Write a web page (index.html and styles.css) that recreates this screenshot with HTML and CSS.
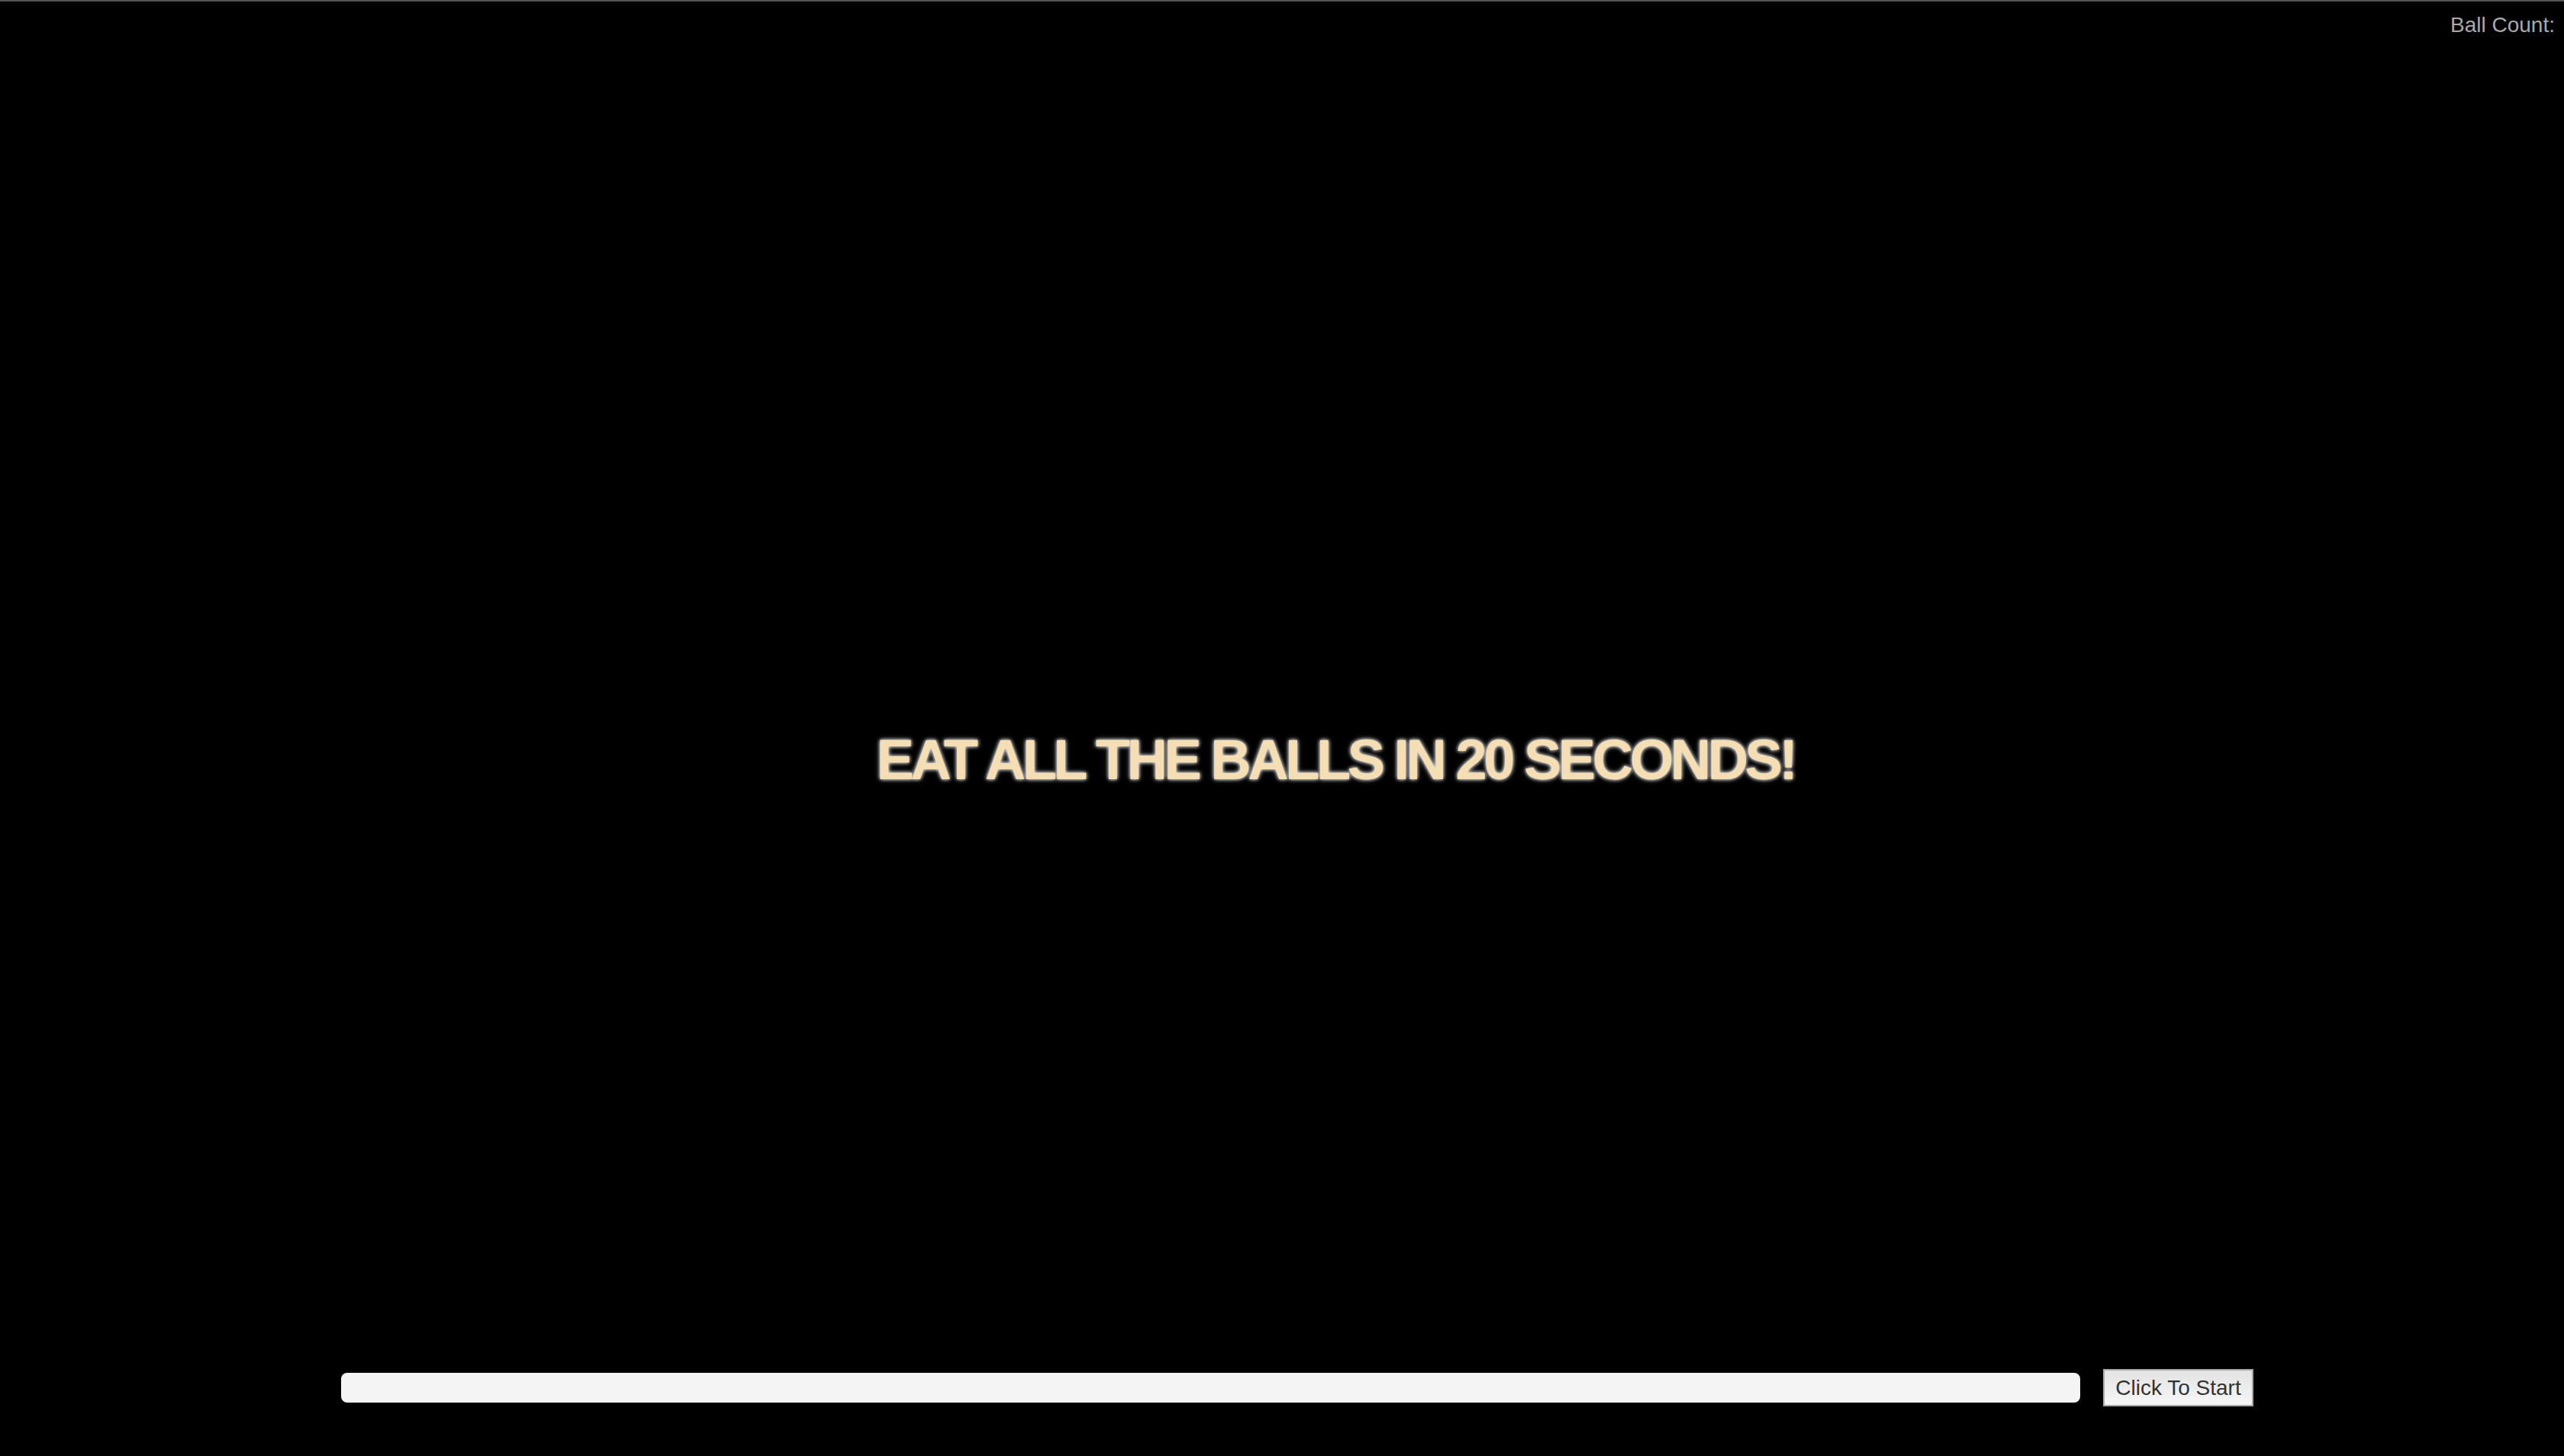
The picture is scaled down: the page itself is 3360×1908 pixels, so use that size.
FILE: index.html
```html
<!DOCTYPE html>
<html lang="en">
<head>
<meta charset="utf-8">
<title>Eat the Balls</title>
<link rel="stylesheet" href="styles.css">
</head>
<body>
<div class="page">
  <header class="topbar">
    <span class="ball-count">Ball Count:</span>
  </header>
  <main class="stage">
    <h1 class="headline">EAT ALL THE BALLS IN 20 SECONDS!</h1>
  </main>
  <footer class="controls">
    <div class="name-field"></div>
    <button class="start-btn" type="button">Click To Start</button>
  </footer>
</div>
</body>
</html>
```
FILE: styles.css
```css
html, body {
  margin: 0;
  padding: 0;
  background: #000;
  overflow: hidden;
}
body {
  font-family: "Liberation Sans", Arial, sans-serif;
}
.page {
  box-sizing: border-box;
  height: 1908px;
  border-top: 2px solid #555;
  display: flex;
  flex-direction: column;
}
.topbar {
  display: flex;
  justify-content: flex-end;
  padding: 15px 12px 0 0;
}
.ball-count {
  color: #a9a9a9;
  font-size: 28px;
  line-height: 32px;
}
.stage {
  flex: 1;
  display: flex;
  align-items: center;
  justify-content: center;
  padding-top: 149px;
  padding-left: 140px;
}
.headline {
  margin: 0;
  color: #f5deb3;
  font-size: 74px;
  font-weight: bold;
  letter-spacing: -4.5px;
  line-height: 1;
  text-shadow: 0 0 4px #fff, 0 0 7px #999;
}
.controls {
  display: flex;
  align-items: center;
  gap: 30px;
  padding: 0 407px 65px 447px;
}
.name-field {
  flex: 1;
  height: 39px;
  background: #f4f4f4;
  border-radius: 8px;
}
.start-btn {
  width: 197px;
  height: 49px;
  border: 2px solid #a8a8a8;
  background: linear-gradient(#e3e3e3, #f6f6f6);
  color: #333;
  font-family: "Liberation Sans", Arial, sans-serif;
  font-size: 28px;
  padding: 0;
}
```
